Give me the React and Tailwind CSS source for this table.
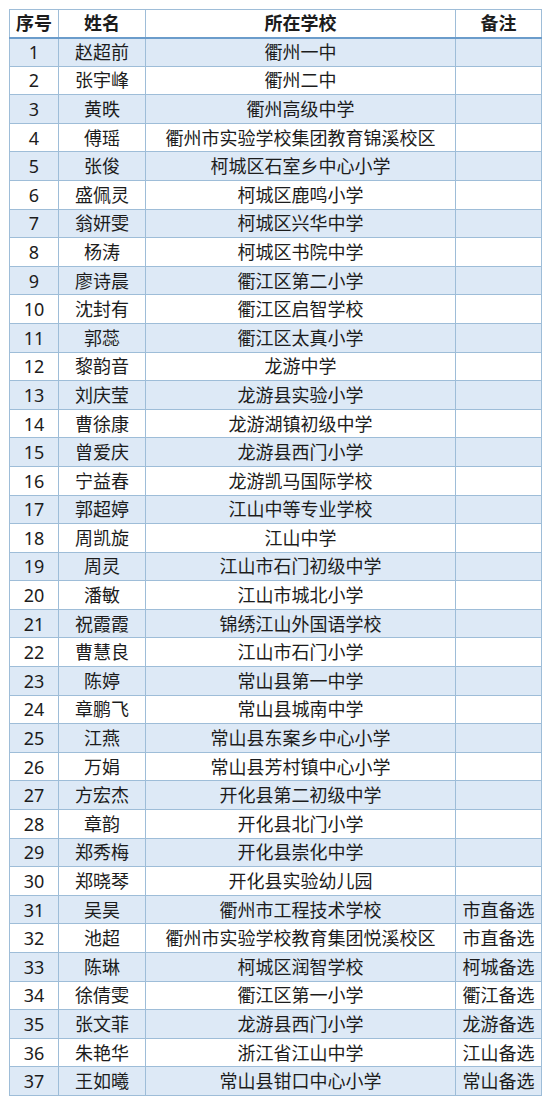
import React from 'react';

const rows = [
  ['赵超前', '衢州一中', ''],
  ['张宇峰', '衢州二中', ''],
  ['黄昳', '衢州高级中学', ''],
  ['傅瑶', '衢州市实验学校集团教育锦溪校区', ''],
  ['张俊', '柯城区石室乡中心小学', ''],
  ['盛佩灵', '柯城区鹿鸣小学', ''],
  ['翁妍雯', '柯城区兴华中学', ''],
  ['杨涛', '柯城区书院中学', ''],
  ['廖诗晨', '衢江区第二小学', ''],
  ['沈封有', '衢江区启智学校', ''],
  ['郭蕊', '衢江区太真小学', ''],
  ['黎韵音', '龙游中学', ''],
  ['刘庆莹', '龙游县实验小学', ''],
  ['曹徐康', '龙游湖镇初级中学', ''],
  ['曾爱庆', '龙游县西门小学', ''],
  ['宁益春', '龙游凯马国际学校', ''],
  ['郭超婷', '江山中等专业学校', ''],
  ['周凯旋', '江山中学', ''],
  ['周灵', '江山市石门初级中学', ''],
  ['潘敏', '江山市城北小学', ''],
  ['祝霞霞', '锦绣江山外国语学校', ''],
  ['曹慧良', '江山市石门小学', ''],
  ['陈婷', '常山县第一中学', ''],
  ['章鹏飞', '常山县城南中学', ''],
  ['江燕', '常山县东案乡中心小学', ''],
  ['万娟', '常山县芳村镇中心小学', ''],
  ['方宏杰', '开化县第二初级中学', ''],
  ['章韵', '开化县北门小学', ''],
  ['郑秀梅', '开化县崇化中学', ''],
  ['郑晓琴', '开化县实验幼儿园', ''],
  ['吴昊', '衢州市工程技术学校', '市直备选'],
  ['池超', '衢州市实验学校教育集团悦溪校区', '市直备选'],
  ['陈琳', '柯城区润智学校', '柯城备选'],
  ['徐倩雯', '衢江区第一小学', '衢江备选'],
  ['张文菲', '龙游县西门小学', '龙游备选'],
  ['朱艳华', '浙江省江山中学', '江山备选'],
  ['王如曦', '常山县钳口中心小学', '常山备选'],
];

export default function App() {
  return (
    <div className="w-[550px] h-[1106px] bg-white pt-[9px] pl-[9px] font-['Noto_Sans','Noto_Sans_CJK_SC',sans-serif] text-[18px] text-[#1c1c1c]">
      <table className="w-[532px] border-collapse table-fixed border border-[#8fb2cf]">
        <colgroup>
          <col className="w-[49px]" />
          <col className="w-[87px]" />
          <col className="w-[310px]" />
          <col className="w-[86px]" />
        </colgroup>
        <thead>
          <tr className="h-[28px] font-bold">
            <th className="border border-[#9ebdd8] border-b-2 border-b-[#6b9ccb] p-0 leading-none">序号</th>
            <th className="border border-[#9ebdd8] border-b-2 border-b-[#6b9ccb] p-0 leading-none">姓名</th>
            <th className="border border-[#9ebdd8] border-b-2 border-b-[#6b9ccb] p-0 leading-none">所在学校</th>
            <th className="border border-[#9ebdd8] border-b-2 border-b-[#6b9ccb] p-0 leading-none">备注</th>
          </tr>
        </thead>
        <tbody>
          {rows.map((r, i) => (
            <tr key={i} className={`h-[28.6px] ${i % 2 === 0 ? 'bg-[#dde9f6]' : 'bg-white'}`}>
              <td className="border border-[#9ebdd8] p-0 text-center leading-none">{i + 1}</td>
              <td className="border border-[#9ebdd8] p-0 text-center leading-none">{r[0]}</td>
              <td className="border border-[#9ebdd8] p-0 text-center leading-none whitespace-nowrap">{r[1]}</td>
              <td className="border border-[#9ebdd8] p-0 text-center leading-none whitespace-nowrap">{r[2]}</td>
            </tr>
          ))}
        </tbody>
      </table>
    </div>
  );
}
